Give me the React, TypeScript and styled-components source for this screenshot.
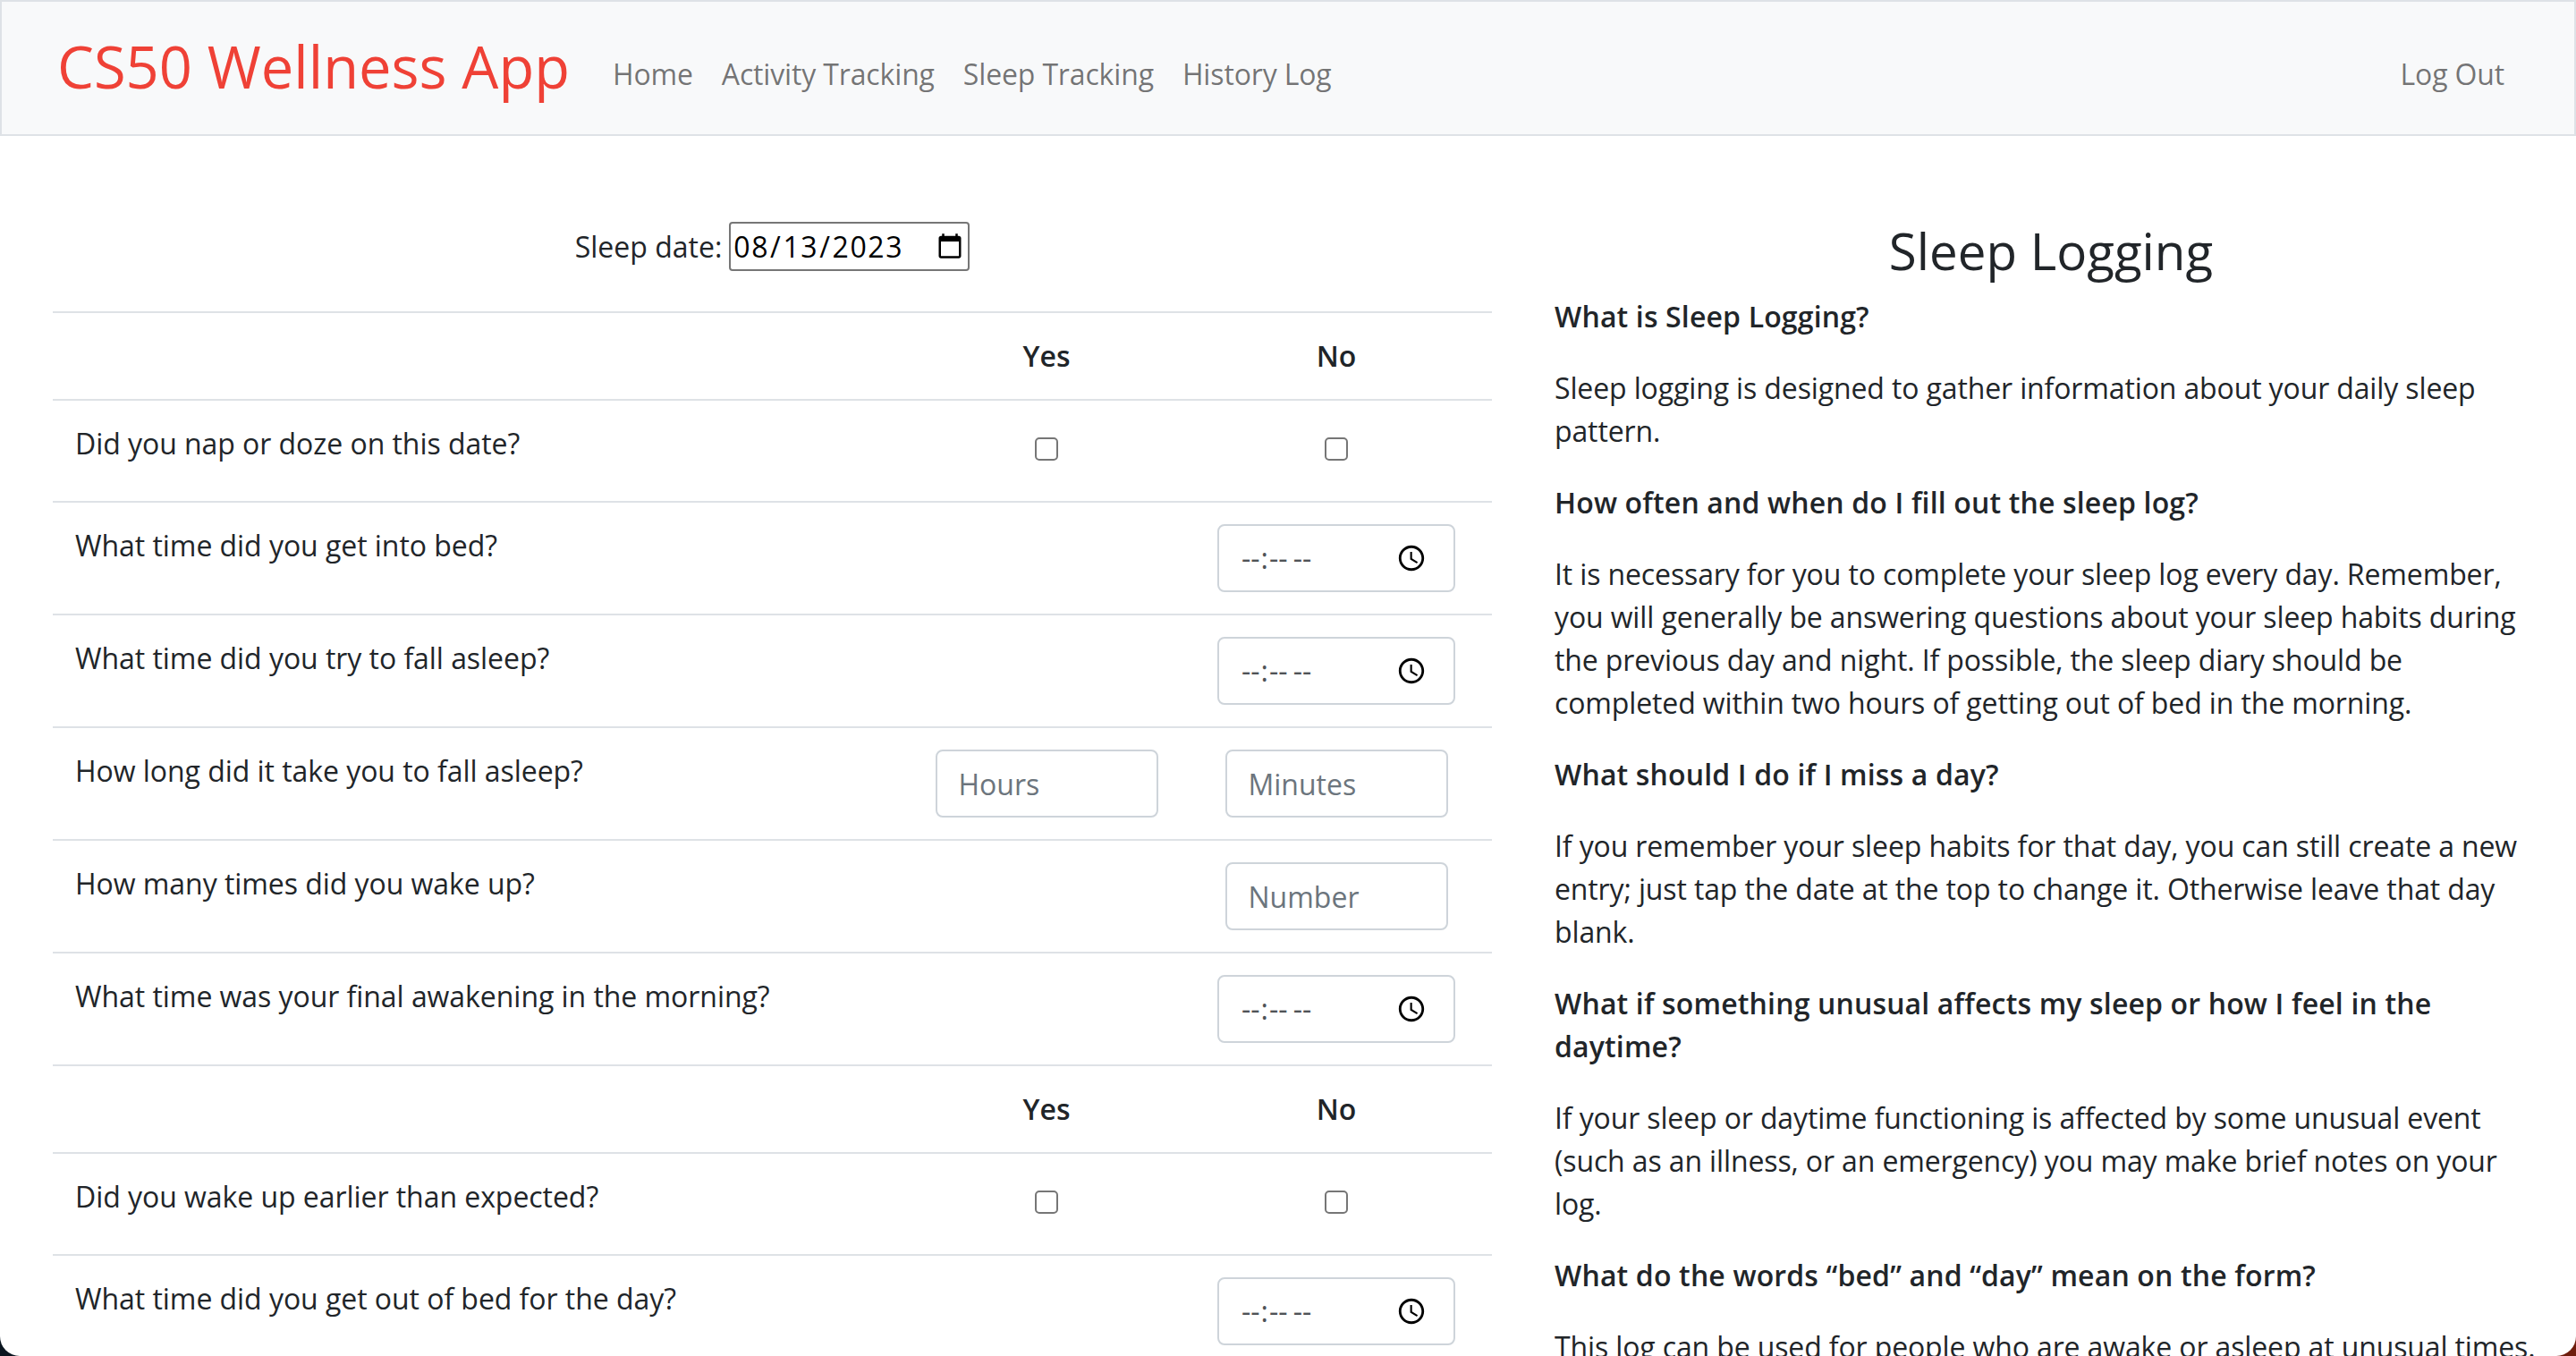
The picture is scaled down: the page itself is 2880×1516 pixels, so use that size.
import styled, { createGlobalStyle } from "styled-components";

const GlobalStyle = createGlobalStyle`
  html, body { margin: 0; height: 100%; }
  html { background: linear-gradient(to right, #0b1620 50%, #6e1c0c 50%); }
  body {
    font-family: "Open Sans", "Liberation Sans", sans-serif;
    font-size: 32px;
    line-height: 48px;
    color: #212529;
  }
  * { box-sizing: border-box; }
`;

const Page = styled.div`
  width: 2880px;
  height: 1516px;
  overflow: hidden;
  background: #fff;
  border-radius: 0 0 22px 22px;
`;

const Navbar = styled.nav`
  height: 152px;
  display: flex;
  align-items: center;
  background: #f8f9fa;
  border: 2px solid #dee2e6;
  padding: 0 78px 0 62px;
`;

const Brand = styled.a`
  font-size: 65px;
  line-height: 76px;
  color: #ef4136;
  margin-right: 48px;
  margin-bottom: 4px;
`;

const NavLink = styled.a<{ $push?: boolean }>`
  color: rgba(0, 0, 0, 0.55);
  margin-right: 32px;
  margin-left: ${(p) => (p.$push ? "auto" : "0")};
  padding-top: 14px;
  letter-spacing: -0.15px;
  &:last-child { margin-right: 0; }
`;

const Main = styled.main`
  display: flex;
  gap: 70px;
  padding: 85px 32px 0 59px;
`;

const FormColumn = styled.section`
  width: 1609px;
  flex: none;
`;

const DateRow = styled.div`
  display: flex;
  justify-content: center;
  align-items: flex-start;
  gap: 8px;
  height: 111px;
  padding-top: 11px;

  label {
    line-height: 55px;
  }
`;

const DateInput = styled.input`
  width: 269px;
  height: 55px;
  font: inherit;
  letter-spacing: 1.6px;
  color: #000;
  background: #fff;
  border: 2px solid #767676;
  border-radius: 4px;
  padding: 2px;
`;

const Row = styled.div<{ $head?: boolean }>`
  display: grid;
  grid-template-columns: 949px 324px 324px;
  padding-right: 12px;
  border-top: 2px solid #dee2e6;
  font-weight: ${(p) => (p.$head ? 600 : 400)};
`;

const Question = styled.div`
  padding: 24px 25px 0;
  letter-spacing: -0.05px;
`;

const Cell = styled.div`
  display: flex;
  align-items: center;
  justify-content: center;
  padding: 24px 0;
`;

const CheckCell = styled(Cell)`
  padding: 41px 0 45px;
`;

const Check = styled.input`
  appearance: none;
  width: 26px;
  height: 26px;
  margin: 0;
  background: #fff;
  border: 2px solid #767676;
  border-radius: 5px;
`;

const FormInput = styled.input<{ $wide?: boolean }>`
  width: ${(p) => (p.$wide ? "266px" : "249px")};
  height: 76px;
  font: inherit;
  color: #4f5357;
  background: #fff;
  border: 2px solid #ced4da;
  border-radius: 8px;
  padding: 12px 24px;
  letter-spacing: ${(p) => (p.$wide ? "0.5px" : "0")};
  &::placeholder { color: #6c757d; }
  &::-webkit-calendar-picker-indicator { margin-right: 3px; }
`;

const InfoColumn = styled.aside`
  flex: 1;
`;

const Heading = styled.h2`
  margin: 0 0 11px;
  padding-top: 5px;
  font-size: 56.5px;
  font-weight: 400;
  line-height: 77px;
  text-align: center;
`;

const Para = styled.p`
  margin: 0 0 32px;
  letter-spacing: -0.13px;
`;

const Ask = styled(Para)`
  font-weight: 600;
  letter-spacing: 0.15px;
`;

const HeadRow = () => (
  <Row $head>
    <div />
    <Cell>Yes</Cell>
    <Cell>No</Cell>
  </Row>
);

const CheckRow = ({ q }: { q: string }) => (
  <Row>
    <Question>{q}</Question>
    <CheckCell>
      <Check type="checkbox" />
    </CheckCell>
    <CheckCell>
      <Check type="checkbox" />
    </CheckCell>
  </Row>
);

const TimeRow = ({ q }: { q: string }) => (
  <Row>
    <Question>{q}</Question>
    <div />
    <Cell>
      <FormInput type="time" $wide />
    </Cell>
  </Row>
);

const App = () => (
  <>
    <GlobalStyle />
    <Page>
      <Navbar>
        <Brand>CS50 Wellness App</Brand>
        <NavLink>Home</NavLink>
        <NavLink>Activity Tracking</NavLink>
        <NavLink>Sleep Tracking</NavLink>
        <NavLink>History Log</NavLink>
        <NavLink $push>Log Out</NavLink>
      </Navbar>
      <Main>
        <FormColumn>
          <DateRow>
            <label>Sleep date:</label>
            <DateInput type="date" defaultValue="2023-08-13" />
          </DateRow>
          <HeadRow />
          <CheckRow q="Did you nap or doze on this date?" />
          <TimeRow q="What time did you get into bed?" />
          <TimeRow q="What time did you try to fall asleep?" />
          <Row>
            <Question>How long did it take you to fall asleep?</Question>
            <Cell>
              <FormInput placeholder="Hours" />
            </Cell>
            <Cell>
              <FormInput placeholder="Minutes" />
            </Cell>
          </Row>
          <Row>
            <Question>How many times did you wake up?</Question>
            <div />
            <Cell>
              <FormInput placeholder="Number" />
            </Cell>
          </Row>
          <TimeRow q="What time was your final awakening in the morning?" />
          <HeadRow />
          <CheckRow q="Did you wake up earlier than expected?" />
          <TimeRow q="What time did you get out of bed for the day?" />
        </FormColumn>
        <InfoColumn>
          <Heading>Sleep Logging</Heading>
          <Ask>What is Sleep Logging?</Ask>
          <Para>
            Sleep logging is designed to gather information about your daily
            sleep pattern.
          </Para>
          <Ask>How often and when do I fill out the sleep log?</Ask>
          <Para>
            It is necessary for you to complete your sleep log every day.
            Remember, you will generally be answering questions about your sleep
            habits during the previous day and night. If possible, the sleep
            diary should be completed within two hours of getting out of bed in
            the morning.
          </Para>
          <Ask>What should I do if I miss a day?</Ask>
          <Para>
            If you remember your sleep habits for that day, you can still create
            a new entry; just tap the date at the top to change it. Otherwise
            leave that day blank.
          </Para>
          <Ask>
            What if something unusual affects my sleep or how I feel in the
            daytime?
          </Ask>
          <Para>
            If your sleep or daytime functioning is affected by some unusual
            event (such as an illness, or an emergency) you may make brief notes
            on your log.
          </Para>
          <Ask>What do the words “bed” and “day” mean on the form?</Ask>
          <Para>
            This log can be used for people who are awake or asleep at unusual
            times.
          </Para>
        </InfoColumn>
      </Main>
    </Page>
  </>
);

export default App;
